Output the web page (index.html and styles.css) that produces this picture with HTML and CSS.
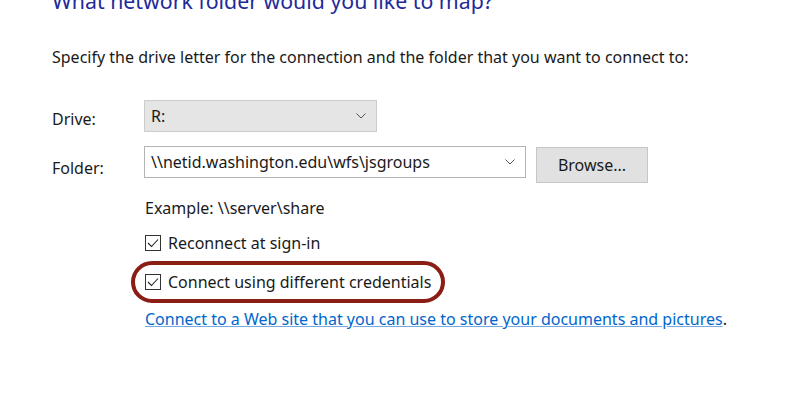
FILE: index.html
```html
<!DOCTYPE html>
<html lang="en">
<head>
<meta charset="utf-8">
<title>Map Network Drive</title>
<link rel="stylesheet" href="styles.css">
</head>
<body>
<main class="wizard">
  <h1 class="title">What network folder would you like to map?</h1>
  <p class="intro">Specify the drive letter for the connection and the folder that you want to connect to:</p>

  <div class="form">
    <label class="label">Drive:</label>
    <div class="combo combo-drive">
      <span class="combo-value">R:</span>
      <svg class="chev" width="10" height="6" viewBox="0 0 10 6"><path d="M0.5 0.5 L5 5 L9.5 0.5" fill="none" stroke="#555" stroke-width="1"/></svg>
    </div>

    <label class="label">Folder:</label>
    <div class="folder-row">
      <div class="combo combo-folder">
        <span class="combo-value">\\netid.washington.edu\wfs\jsgroups</span>
        <svg class="chev" width="10" height="6" viewBox="0 0 10 6"><path d="M0.5 0.5 L5 5 L9.5 0.5" fill="none" stroke="#555" stroke-width="1"/></svg>
      </div>
      <button class="btn">Browse...</button>
    </div>

    <div class="options">
      <p class="example">Example: \\server\share</p>
      <div class="check-row">
        <span class="box"><svg width="14" height="14" viewBox="0 0 14 14"><path d="M2 7 L5.5 10.5 L12 3.5" fill="none" stroke="#222" stroke-width="1.1"/></svg></span>
        <span>Reconnect at sign-in</span>
      </div>
      <div class="highlight">
        <div class="check-row">
          <span class="box"><svg width="14" height="14" viewBox="0 0 14 14"><path d="M2 7 L5.5 10.5 L12 3.5" fill="none" stroke="#222" stroke-width="1.1"/></svg></span>
          <span>Connect using different credentials</span>
        </div>
      </div>
      <p class="web"><a href="#" class="link">Connect to a Web site that you can use to store your documents and pictures</a>.</p>
    </div>
  </div>
</main>
</body>
</html>
```

FILE: styles.css
```css
html, body {
  margin: 0;
  padding: 0;
  background: #ffffff;
}

body {
  font-family: "Noto Sans", "Open Sans", sans-serif;
  font-size: 16px;
  color: #1a1a1a;
  overflow: hidden;
}

.wizard {
  padding-left: 52px;
}

.title {
  margin: -14px 0 0;
  font-size: 21.3px;
  font-weight: 400;
  color: #1e2a9a;
  line-height: 30px;
}

.intro {
  margin: 30px 0 0;
  line-height: 22px;
}

.form {
  display: grid;
  grid-template-columns: 92px auto;
  row-gap: 14px;
  margin-top: 32px;
  align-items: center;
}

.label {
  line-height: 20px;
  padding-top: 6px;
}

.combo {
  box-sizing: border-box;
  height: 32px;
  display: flex;
  align-items: center;
  justify-content: space-between;
  padding: 0 10px 0 6px;
  border: 1px solid #cccccc;
}

.combo-drive {
  width: 233px;
  background: #e5e5e5;
}

.folder-row {
  display: flex;
  align-items: flex-start;
  gap: 10px;
}

.combo-folder {
  width: 382px;
  background: #ffffff;
  border-color: #b4b4b4;
}

.chev {
  display: block;
}

.btn {
  box-sizing: border-box;
  width: 112px;
  height: 36px;
  margin-top: 1px;
  background: #e1e1e1;
  border: 1px solid #c6c6c6;
  font: inherit;
  color: #1a1a1a;
  padding: 0;
}

.options {
  grid-column: 2;
  display: flex;
  flex-direction: column;
  align-items: flex-start;
  padding-left: 1px;
}

.example {
  margin: 0;
  line-height: 22px;
}

.check-row {
  display: flex;
  align-items: center;
  gap: 7px;
  line-height: 22px;
}

.options > .check-row {
  margin-top: 13px;
}

.box {
  box-sizing: border-box;
  width: 16px;
  height: 16px;
  border: 1px solid #333333;
  display: flex;
  align-items: center;
  justify-content: center;
  background: #fff;
}

.box svg {
  display: block;
}

.highlight {
  margin: 7px 0 0 -14px;
  padding: 6px 10px 6px 10px;
  border: 4px solid #8a1d14;
  border-radius: 22px;
}

.web {
  margin: 5px 0 0;
  line-height: 22px;
}

.link {
  color: #0066cc;
  text-decoration: underline;
  text-decoration-color: #7aa9e0;
}
```
